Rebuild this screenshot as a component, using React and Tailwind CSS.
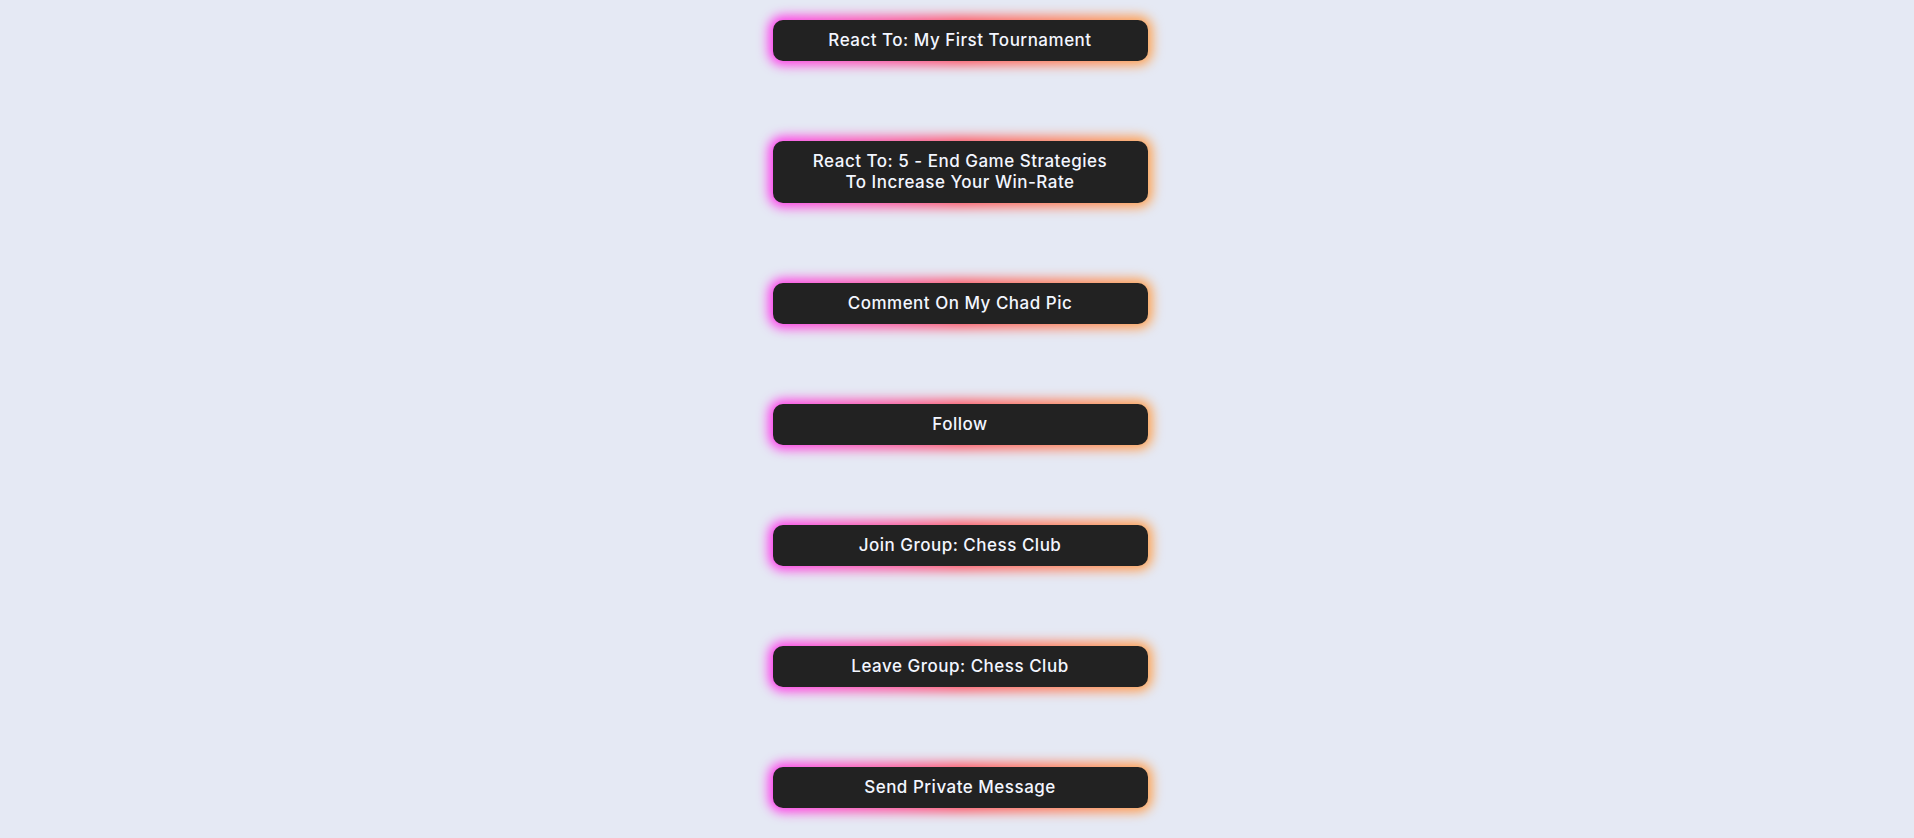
import React from 'react';

const actions = [
  'React To: My First Tournament',
  ['React To: 5 - End Game Strategies', 'To Increase Your Win-Rate'],
  'Comment On My Chad Pic',
  'Follow',
  'Join Group: Chess Club',
  'Leave Group: Chess Club',
  'Send Private Message',
];

function GlowButton({ label }) {
  const lines = Array.isArray(label) ? label : [label];
  return (
    <div className="relative w-[375px]">
      <div className="absolute -inset-[4px] rounded-[14px] bg-gradient-to-r from-[#ff2ef0] via-[#ff4f5f] to-[#ffa048] blur-[6px]" />
      <button className="relative w-full rounded-[10px] bg-[#222222] py-[10px] px-4 text-[17px] leading-[21px] font-medium tracking-[0.5px] text-[#f3f6ff]">
        {lines.map((l) => (
          <div key={l}>{l}</div>
        ))}
      </button>
    </div>
  );
}

export default function App() {
  return (
    <div
      className="min-h-screen bg-[#e5e9f4] flex flex-col items-center gap-[80px] pt-[20px] pl-[6px] pb-10"
      style={{ fontFamily: 'Inter, "Noto Sans", sans-serif' }}
    >
      {actions.map((a, i) => (
        <GlowButton key={i} label={a} />
      ))}
    </div>
  );
}
